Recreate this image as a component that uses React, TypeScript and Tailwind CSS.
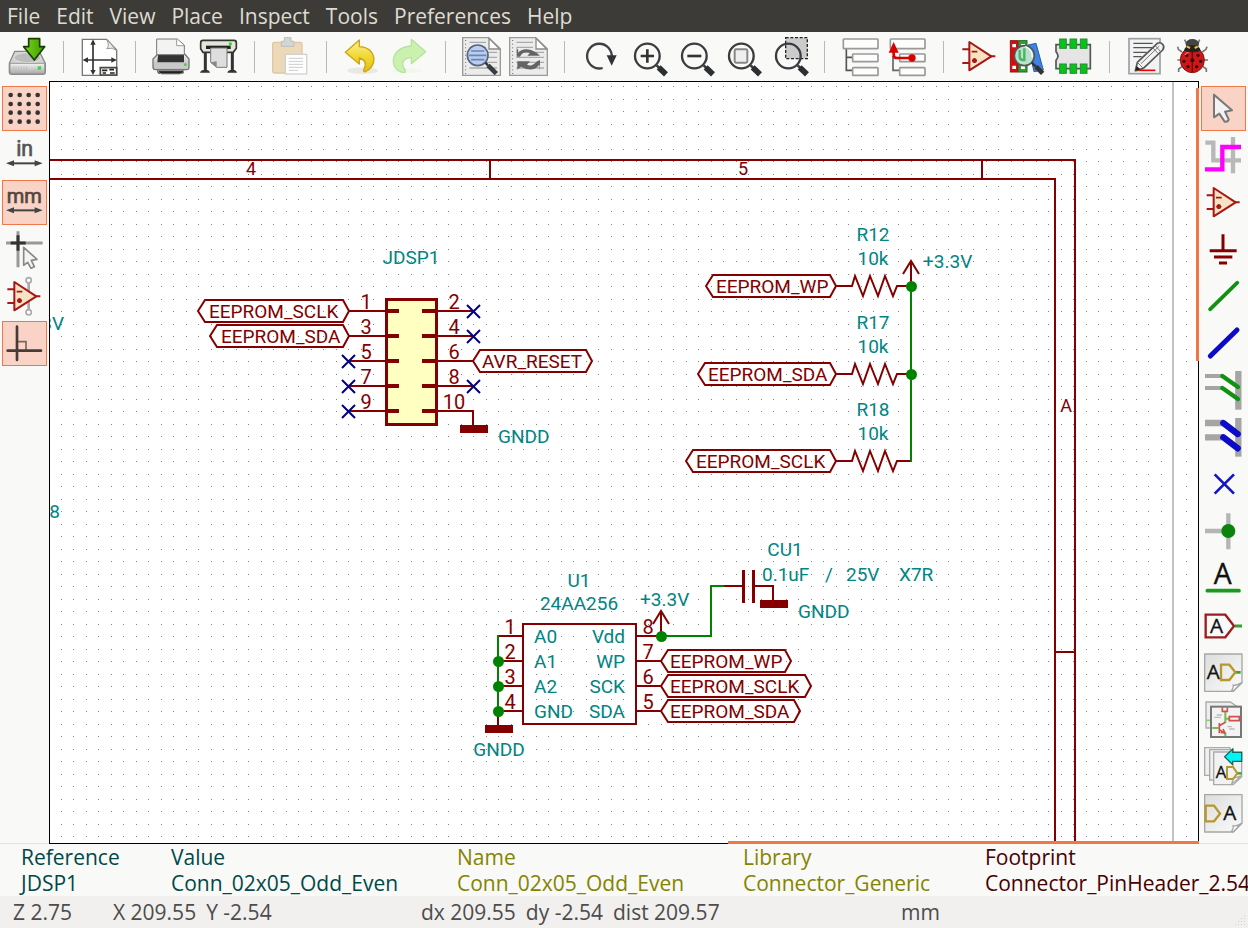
import type { ReactNode } from "react";

const MAROON = "#840000";
const TEAL = "#008484";
const GREEN = "#008400";
const BLUE = "#000084";

/* ---------- icons: each is drawn on a 117-unit square ---------- */

type Tool = { label: string; x: number; y: number; art: ReactNode; active?: boolean };

function Icon({ x, y, art }: { x: number; y: number; art: ReactNode }) {
  return (
    <svg className="size-[39px] shrink-0 overflow-visible" viewBox={`${x} ${y} 117 117`} fill="none" aria-hidden="true">
      {art}
    </svg>
  );
}

function OpAmp() {
  return (
    <g stroke="#a81616" strokeWidth="6">
      <path d="M0 26H22M0 67H22M84 47H99" />
      <path d="M21 4V89L87 47Z" fill="#f5e3c3" strokeLinejoin="round" />
      <path d="M28 33H45M29 60H44M36.500 53V67" strokeWidth="5" />
      <circle cx="36.500" cy="60" r="5" strokeWidth="4" />
    </g>
  );
}

function Lens({ cx, cy }: { cx: number; cy: number }) {
  return (
    <g stroke="#3a3d3f">
      <circle cx={cx} cy={cy} r="37" strokeWidth="7" />
      <path d={`M${cx + 28} ${cy + 28}L${cx + 36} ${cy + 36}`} strokeWidth="8" />
      <path d={`M${cx + 34} ${cy + 34}L${cx + 56} ${cy + 55}`} strokeWidth="17" stroke="#2c2f31" />
    </g>
  );
}

function Notes({ x }: { x: number }) {
  return (
    <g>
      <path
        d={`M${x} 113H${x + 78}L${x + 113} 146V226H${x}Z`}
        fill="#ececec"
        stroke="#9a9a9a"
        strokeWidth="4"
      />
      <path d={`M${x + 79} 115V147H${x + 111}Z`} fill="#fff" stroke="#8b8b8b" strokeWidth="4" />
      <path d={`M${x + 9} 120V222`} stroke="#666" strokeWidth="3" strokeDasharray="3 8" />
      <path
        d={`M${x + 20} 127H${x + 70}M${x + 20} 142H${x + 70}M${x + 20} 157H${x + 103}M${x + 20} 172H${x + 103}M${x + 20} 187H${x + 103}M${x + 20} 204H${x + 103}`}
        stroke="#aaa"
        strokeWidth="4"
      />
    </g>
  );
}

function Fold({ x, y }: { x: number; y: number }) {
  return (
    <g stroke="#a5a7a7" strokeWidth="4" strokeLinejoin="round">
      <path d={`M${x} ${y}H${x + 112}V${y + 86}L${x + 86} ${y + 112}H${x}Z`} fill="url(#paper)" />
      <path d={`M${x + 80} ${y + 111}Q${x + 88} ${y + 99} ${x + 85} ${y + 93}Q${x + 96} ${y + 96} ${x + 111} ${y + 86}L${x + 86} ${y + 111}Z`} fill="#fff" />
    </g>
  );
}

function Letter({ x, y, size, color = "#111" }: { x: number; y: number; size: number; color?: string }) {
  return (
    <text x={x} y={y} fontSize={size} fill={color} stroke={color} strokeWidth="1" fontFamily="Open Sans, sans-serif">
      A
    </text>
  );
}

const gradients = (
  <svg className="absolute size-0" aria-hidden="true">
    <defs>
      <linearGradient id="steel" x1="0" y1="0" x2="0" y2="1">
        <stop offset="0" stopColor="#f4f4f4" />
        <stop offset="1" stopColor="#a9a9a9" />
      </linearGradient>
      <linearGradient id="paper" x1="0" y1="0" x2="1" y2="1">
        <stop offset="0" stopColor="#dcdddd" />
        <stop offset="1" stopColor="#fbfbfb" />
      </linearGradient>
      <linearGradient id="gold" x1="0" y1="0" x2="0" y2="1">
        <stop offset="0" stopColor="#fdf19a" />
        <stop offset="0.5" stopColor="#f1d935" />
        <stop offset="1" stopColor="#e3bd14" />
      </linearGradient>
      <linearGradient id="arrowGreen" x1="0" y1="0" x2="1" y2="0">
        <stop offset="0" stopColor="#78d614" />
        <stop offset="1" stopColor="#3f9a04" />
      </linearGradient>
    </defs>
  </svg>
);

const topGroups: Tool[][] = [
  [
    {
      label: "Save", x: 24, y: 111, art: (
        <g>
          <path d="M44 154H118L136 190V216Q136 223 129 223H35Q28 223 28 216V190Z" fill="#d2d2d2" stroke="#8a8a8a" strokeWidth="4" />
          <ellipse cx="82" cy="173" rx="40" ry="15" fill="#bcbcbc" stroke="#eee" strokeWidth="2" />
          <path d="M30 190H134V215Q134 221 128 221H36Q30 221 30 215Z" fill="url(#steel)" stroke="#989898" strokeWidth="3" />
          <path d="M40 199V214M48 199V214M56 199V214M64 199V214M72 199V214M80 199V214" stroke="#bdbdbd" strokeWidth="3" />
          <rect x="113" y="199" width="10" height="10" fill="#3bd63b" />
          <path d="M86 116H119V140H134L103 180L71 140H86Z" fill="url(#arrowGreen)" stroke="#173d04" strokeWidth="5" strokeLinejoin="round" />
        </g>
      ),
    },
  ],
  [
    {
      label: "Page settings", x: 240, y: 111, art: (
        <g>
          <path d="M247 118H320L350 150V226H247Z" fill="#fff" stroke="#777" strokeWidth="4" />
          <path d="M320 118Q330 139 320 146Q338 140 350 152Z" fill="#eee" stroke="#999" strokeWidth="3" />
          <path d="M279 124V220M252 180H346" stroke="#333" strokeWidth="5" />
          <path d="M279 118L271 134H287ZM279 225L271 210H287ZM248 180L264 172V188ZM350 180L334 172V188Z" fill="#333" />
          <path d="M301 203H350V225H301Z" fill="#fff" stroke="#4a4545" strokeWidth="5" />
          <path d="M306 211H322M328 209H342M308 219H318M330 219H344" stroke="#222" strokeWidth="5" />
        </g>
      ),
    },
  ],
  [
    {
      label: "Print", x: 456, y: 111, art: (
        <g>
          <rect x="472" y="194" width="80" height="28" rx="8" fill="#333" />
          <path d="M474 162H554L567 177V202Q567 209 560 209H466Q459 209 459 202V177Z" fill="url(#steel)" stroke="#777" strokeWidth="4" />
          <path d="M474 165H552V187H472Z" fill="#333" />
          <path d="M470 117H532L553 135V164H470Z" fill="#f3f3f3" stroke="#777" strokeWidth="3" />
          <path d="M530 117V137H552" fill="#fff" stroke="#999" strokeWidth="3" />
          <path d="M463 190H564V206H463Z" fill="#c9c9c9" />
          <path d="M474 212H552Q550 222 538 222H486Q476 222 474 212Z" fill="#222" stroke="#999" strokeWidth="3" />
          <circle cx="556" cy="194" r="4" fill="#44d322" />
        </g>
      ),
    },
    {
      label: "Plot", x: 597, y: 111, art: (
        <g>
          <path d="M616 154V211M697 154V211" stroke="#333" strokeWidth="9" />
          <path d="M600 218Q602 209 616 209Q628 209 630 218ZM682 218Q684 209 697 209Q709 209 711 218Z" fill="#333" />
          <path d="M609 121H702Q709 121 709 128V145L700 157H609L602 146V128Q602 121 609 121Z" fill="#e4e4dd" stroke="#34342f" strokeWidth="5" />
          <path d="M618 142H692" stroke="#222" strokeWidth="10" />
          <path d="M632 144H681V202H650L632 187Z" fill="#dedede" stroke="#777" strokeWidth="3" />
          <path d="M632 187L650 202V184Z" fill="#888" />
          <circle cx="691" cy="132" r="5" fill="#29df17" />
        </g>
      ),
    },
  ],
  [
    {
      label: "Paste", x: 813, y: 111, art: (
        <g>
          <rect x="818" y="127" width="88" height="92" rx="5" fill="#edd9b8" stroke="#ddc7a5" strokeWidth="4" />
          <path d="M844 139V124H853V113H873V124H882V139Z" fill="#d5d5d3" stroke="#bdbdbb" strokeWidth="3" />
          <rect x="856" y="163" width="64" height="59" fill="#fff" stroke="#d1d1d1" strokeWidth="4" />
          <path d="M866 175H909M866 184H909M866 193H909M866 202H909M866 211H895" stroke="#ccc" strokeWidth="3" />
        </g>
      ),
    },
  ],
  [
    {
      label: "Undo", x: 1029, y: 111, art: (
        <g>
          <ellipse cx="1088" cy="212" rx="46" ry="10" fill="#e9e9e4" />
          <path d="M1036 157L1078 120V140Q1115 141 1122 175Q1122 204 1095 216Q1087 213 1093 206Q1103 181 1078 174V192Z" fill="url(#gold)" stroke="#cda412" strokeWidth="4" strokeLinejoin="round" />
        </g>
      ),
    },
    {
      label: "Redo", x: 1170, y: 111, art: (
        <g>
          <ellipse cx="1222" cy="212" rx="44" ry="8" fill="#f3f5ef" />
          <path d="M1277 155L1234 118V138Q1188 141 1180 178Q1178 207 1206 217H1215Q1218 211 1211 204Q1200 177 1234 172V191Z" fill="#caf2ae" stroke="#b5e39d" strokeWidth="4" strokeLinejoin="round" />
        </g>
      ),
    },
  ],
  [
    {
      label: "Find", x: 96, y: 111, art: (
        <g>
          <Notes x={98} />
          <circle cx="143" cy="166" r="31" fill="#bccdf0" stroke="#57657e" strokeWidth="5" />
          <path d="M123 153H163M117 166H169M123 179H163" stroke="#6787b8" strokeWidth="5" />
          <path d="M166 188L174 196" stroke="#333" strokeWidth="7" />
          <path d="M174 196L199 221" stroke="#3a3d40" strokeWidth="14" />
        </g>
      ),
    },
    {
      label: "Find and replace", x: 237, y: 111, art: (
        <g>
          <Notes x={239} />
          <path d="M263 160Q282 137 320 158L330 167H292L300 158Q278 153 270 170H260V143L265 151Z" fill="#636565" />
          <path d="M328 194Q308 220 273 200L262 209V184H300L291 194Q306 202 321 184L330 180V213Z" fill="#636565" />
        </g>
      ),
    },
  ],
  [
    {
      label: "Refresh", x: 453, y: 111, art: (
        <g>
          <path d="M518 204A37 37 0 1 1 545 172" stroke="#3f4244" strokeWidth="7" />
          <path d="M530 166H560L545 197Z" fill="#2f3234" />
        </g>
      ),
    },
    {
      label: "Zoom in", x: 594, y: 111, art: (
        <g>
          <Lens cx={652} cy={168} />
          <path d="M632 168H672M652 148V188" stroke="#333" strokeWidth="8" />
        </g>
      ),
    },
    {
      label: "Zoom out", x: 735, y: 111, art: (
        <g>
          <Lens cx={793} cy={168} />
          <path d="M772 168H814" stroke="#333" strokeWidth="8" />
        </g>
      ),
    },
    {
      label: "Zoom to fit", x: 876, y: 111, art: (
        <g>
          <Lens cx={934} cy={168} />
          <rect x="914" y="148" width="38" height="40" rx="4" fill="#eee" stroke="#888" strokeWidth="6" />
        </g>
      ),
    },
    {
      label: "Zoom to selection", x: 1017, y: 111, art: (
        <g>
          <rect x="1067" y="113" width="65" height="63" fill="#cbcbcb" stroke="#222" strokeWidth="4" strokeDasharray="9 5" />
          <Lens cx={1075} cy={168} />
        </g>
      ),
    },
  ],
  [
    {
      label: "Hierarchy", x: 63, y: 111, art: (
        <g strokeWidth="5">
          <path d="M79 147V211H97M79 172H97" stroke="#555" />
          <g fill="#fdfdfd" stroke="#999">
            <rect x="70" y="117" width="104" height="29" rx="2" />
            <rect x="98" y="162" width="76" height="23" rx="2" />
            <rect x="98" y="203" width="76" height="23" rx="2" />
          </g>
        </g>
      ),
    },
    {
      label: "Leave sheet", x: 204, y: 111, art: (
        <g strokeWidth="5">
          <path d="M219 168V211H238" stroke="#666" />
          <g fill="#fdfdfd" stroke="#999">
            <rect x="211" y="117" width="104" height="29" rx="2" />
            <rect x="239" y="162" width="76" height="23" rx="2" />
            <rect x="239" y="203" width="76" height="23" rx="2" />
          </g>
          <path d="M221 150V164Q221 174 231 174H276" stroke="#d90000" strokeWidth="8" />
          <path d="M221 126L236 158H206Z" fill="#d90000" />
          <circle cx="276" cy="174" r="11" fill="#d90000" />
        </g>
      ),
    },
  ],
  [
    { label: "Symbol editor", x: 420, y: 111, art: <g transform="translate(427 122)"><OpAmp /></g> },
    {
      label: "Symbol libraries", x: 561, y: 111, art: (
        <g>
          <rect x="571" y="122" width="23" height="94" fill="#d50d0d" stroke="#8a1a1a" strokeWidth="3" />
          <rect x="596" y="122" width="25" height="94" fill="#2da32e" stroke="#23632a" strokeWidth="3" />
          <path d="M577 137H588M577 202H588M603 137H615M603 202H615" stroke="#fff" strokeWidth="10" />
          <path d="M624 135L648 130L670 210L642 215Z" fill="#3d82e4" stroke="#285f9e" strokeWidth="3" />
          <circle cx="613" cy="167" r="30" fill="#bce0cf" stroke="#555" strokeWidth="5" />
          <path d="M599 150V172Q601 182 613 180V145" stroke="#45b65c" strokeWidth="7" />
          <path d="M616 139Q638 148 637 172" stroke="#fff" strokeWidth="4" />
          <path d="M635 188L648 200" stroke="#333" strokeWidth="7" />
          <path d="M648 200L668 220" stroke="#333" strokeWidth="14" />
        </g>
      ),
    },
    {
      label: "Footprint editor", x: 702, y: 111, art: (
        <g>
          <path d="M708 134H811V206H708V181Q720 168 708 155Z" fill="#e5e5e5" stroke="#555" strokeWidth="5" />
          <g fill="#04c41c" stroke="#2a8c33" strokeWidth="3">
            <rect x="719" y="117" width="20" height="28" />
            <rect x="750" y="117" width="20" height="28" />
            <rect x="781" y="117" width="20" height="28" />
            <rect x="719" y="192" width="20" height="28" />
            <rect x="750" y="192" width="20" height="28" />
            <rect x="781" y="192" width="20" height="28" />
          </g>
        </g>
      ),
    },
  ],
  [
    {
      label: "Annotate", x: 918, y: 111, art: (
        <g>
          <rect x="927" y="116" width="93" height="105" fill="#f3f3f3" stroke="#9aa1a4" strokeWidth="5" />
          <path d="M940 130H998M940 143H998M940 157H980M940 170H965" stroke="#555" strokeWidth="4" />
          <path d="M946 211H1006" stroke="#f20000" strokeWidth="5" />
          <path d="M952 187L1012 130Q1022 125 1029 134Q1034 142 1028 150L970 205L946 212Z" fill="#f3f3f3" stroke="#555" strokeWidth="5" strokeLinejoin="round" />
          <path d="M963 191L1018 138M998 143L1014 160M952 187L970 205M1005 136L1021 154" stroke="#777" strokeWidth="3" />
          <path d="M950 198L946 212L961 208Z" fill="#222" />
        </g>
      ),
    },
    {
      label: "Electrical rules check", x: 1059, y: 111, art: (
        <g>
          <path d="M1086 156L1075 148L1073 140M1147 156L1158 148L1161 140M1082 180H1072M1152 180H1164M1087 199L1076 207V216M1148 199L1159 207V216M1100 132L1094 119M1133 132L1139 119" stroke="#777" strokeWidth="5" />
          <ellipse cx="1117" cy="132" rx="20" ry="15" fill="#444" />
          <ellipse cx="1117" cy="180" rx="36" ry="38" fill="#cf1717" stroke="#821414" strokeWidth="3" />
          <path d="M1092 152Q1095 136 1117 136Q1139 136 1142 152Q1118 162 1092 152Z" fill="#222" />
          <path d="M1101 140L1110 144M1133 140L1124 144" stroke="#f0ca22" strokeWidth="6" />
          <path d="M1117 154V216" stroke="#5d0909" strokeWidth="4" />
          <g fill="#3a0808">
            <circle cx="1100" cy="166" r="5" /><circle cx="1134" cy="166" r="5" />
            <circle cx="1092" cy="184" r="5" /><circle cx="1142" cy="184" r="5" />
            <circle cx="1104" cy="200" r="5" /><circle cx="1130" cy="200" r="5" />
            <circle cx="1117" cy="181" r="6" />
          </g>
          <path d="M1095 165Q1099 158 1106 157" stroke="#f27777" strokeWidth="4" />
        </g>
      ),
    },
  ],
];

const unitArrow = (y: number) => (
  <g>
    <path d={`M30 ${y}H116`} stroke="#444" strokeWidth="6" />
    <path d={`M18 ${y}L42 ${y - 9}V${y + 9}ZM128 ${y}L104 ${y - 9}V${y + 9}Z`} fill="#444" />
  </g>
);

const leftTools: Tool[] = [
  {
    label: "Show grid", x: 15, y: 27, active: true, art: (
      <g fill="#333">
        {[45, 72, 98, 125].map((cy) => [32, 59, 86, 113].map((cx) => <circle key={`${cx}-${cy}`} cx={cx} cy={cy} r="7" />))}
      </g>
    ),
  },
  {
    label: "Inches", x: 15, y: 168, art: (
      <g>
        <text x="74" y="229" fontSize="64" textAnchor="middle" fill="#555" stroke="#555" strokeWidth="2" fontFamily="Roboto, sans-serif">in</text>
        {unitArrow(250)}
      </g>
    ),
  },
  {
    label: "Millimetres", x: 15, y: 309, active: true, art: (
      <g>
        <text x="73" y="370" fontSize="60" textAnchor="middle" fill="#54463f" stroke="#54463f" strokeWidth="2" fontFamily="Roboto, sans-serif">mm</text>
        {unitArrow(391)}
      </g>
    ),
  },
  {
    label: "Cursor shape", x: 15, y: 450, art: (
      <g>
        <path d="M18 489H128M54 454V562" stroke="#999" strokeWidth="9" />
        <path d="M32 489H77M54 466V512" stroke="#333" strokeWidth="9" />
        <path d="M71 502V556L83 547L93 565L103 560L94 541L111 538Z" fill="#f4f4f4" stroke="#888" strokeWidth="5" strokeLinejoin="round" />
      </g>
    ),
  },
  {
    label: "Hidden pins", x: 15, y: 591, art: (
      <g>
        <path d="M86 604V694" stroke="#aaa" strokeWidth="8" />
        <g fill="#fff" stroke="#aaa" strokeWidth="5">
          <circle cx="86" cy="601" r="8" />
          <circle cx="86" cy="697" r="8" />
        </g>
        <g transform="translate(22 602)"><OpAmp /></g>
      </g>
    ),
  },
  {
    label: "Horizontal and vertical lines", x: 15, y: 732, active: true, art: (
      <g>
        <path d="M51 785H78V812" stroke="#78685f" strokeWidth="5" />
        <path d="M51 740V840M23 812H123" stroke="#463b36" strokeWidth="8" strokeLinecap="round" />
      </g>
    ),
  },
];

const rightTools: Tool[] = [
  {
    label: "Select", x: 162, y: 27, active: true, art: (
      <path d="M192 44V112L208 101L224 125Q234 127 236 118L225 95L246 91Z" fill="#f2f2f2" stroke="#777" strokeWidth="6" strokeLinejoin="round" />
    ),
  },
  {
    label: "Highlight net", x: 162, y: 168, art: (
      <g strokeWidth="13">
        <path d="M166 188H190V241H273M249 171V280" stroke="#b8b8b8" />
        <path d="M165 268H217V201H273" stroke="#ff00ff" />
      </g>
    ),
  },
  { label: "Place symbol", x: 162, y: 309, art: <g transform="translate(170 320)"><OpAmp /></g> },
  {
    label: "Place power port", x: 162, y: 450, art: (
      <path d="M219 463V512M179 512H260M192 531H247M207 549H231" stroke="#840000" strokeWidth="9" />
    ),
  },
  { label: "Place wire", x: 162, y: 591, art: <path d="M180 688L262 608" stroke="#129012" strokeWidth="11" strokeLinecap="round" /> },
  { label: "Place bus", x: 162, y: 732, art: <path d="M181 828L261 750" stroke="#0b0bc8" strokeWidth="15" strokeLinecap="round" /> },
  {
    label: "Wire to bus entry", x: 162, y: 873, art: (
      <g>
        <path d="M265 873V989" stroke="#a5a5a5" strokeWidth="19" />
        <path d="M165 888H217M165 924H217" stroke="#a5a5a5" strokeWidth="12" />
        <path d="M217 888L264 921M217 924L264 957" stroke="#129012" strokeWidth="13" strokeLinecap="round" />
      </g>
    ),
  },
  {
    label: "Bus to bus entry", x: 162, y: 1014, art: (
      <g>
        <path d="M265 1014V1130" stroke="#a5a5a5" strokeWidth="19" />
        <path d="M165 1029H217M165 1072H217" stroke="#a5a5a5" strokeWidth="19" />
        <path d="M220 1029L263 1062M220 1072L263 1105" stroke="#0b0bc8" strokeWidth="19" strokeLinecap="round" />
      </g>
    ),
  },
  { label: "No-connect flag", x: 162, y: 30, art: <path d="M194 58L252 116M252 58L194 116" stroke="#1414c8" strokeWidth="8" /> },
  {
    label: "Junction", x: 162, y: 171, art: (
      <g>
        <path d="M165 228H235M235 175V283" stroke="#b5b5b5" strokeWidth="13" />
        <circle cx="235" cy="228" r="21" fill="#0b840b" />
      </g>
    ),
  },
  {
    label: "Net label", x: 162, y: 312, art: (
      <g>
        <Letter x={191} y={387} size={85} />
        <path d="M172 407H267" stroke="#1c9a1c" strokeWidth="11" strokeLinecap="round" />
      </g>
    ),
  },
  {
    label: "Global label", x: 162, y: 453, art: (
      <g>
        <path d="M255 513H276" stroke="#31a331" strokeWidth="9" />
        <path d="M167 479H226L252 513L226 547H167Z" fill="#fafafa" stroke="#9c1d1d" strokeWidth="7" />
        <Letter x={180} y={534} size={62} />
      </g>
    ),
  },
  {
    label: "Hierarchical label", x: 162, y: 594, art: (
      <g>
        <Fold x={164} y={597} />
        <Letter x={170} y={672} size={62} />
        <path d="M256 652H272" stroke="#31a331" strokeWidth="8" />
        <path d="M213 629H238L256 652L238 675H213Z" stroke="#b8982a" strokeWidth="7" />
      </g>
    ),
  },
  {
    label: "Hierarchical sheet", x: 162, y: 735, art: (
      <g>
        <path d="M168 741H241L272 762V819H168Z" fill="#eee" stroke="#aaa" strokeWidth="4" />
        <path d="M168 796H182" stroke="#8bd26a" strokeWidth="5" />
        <rect x="183" y="755" width="90" height="91" fill="#f3f3f3" stroke="#777" strokeWidth="6" />
        <path d="M187 819H206M226 771V804M226 835V844M226 791H239" stroke="#74bd4c" strokeWidth="6" />
        <path d="M217 757V769H232V757M238 785H268V797H238ZM208 804V835M208 812L226 802M208 824L226 836M212 832L225 834L219 822" stroke="#d05050" strokeWidth="5" />
        <path d="M200 780H216M193 787H212M232 815H246M238 822H254" stroke="#bbb" strokeWidth="4" />
      </g>
    ),
  },
  {
    label: "Import sheet pin", x: 162, y: 876, art: (
      <g>
        <path d="M164 878H240V961H164Z" fill="#f0f0f0" stroke="#aaa" strokeWidth="4" />
        <path d="M179 884H250V975H179Z" fill="#f0f0f0" stroke="#aaa" strokeWidth="4" />
        <path d="M191 891H275V965L250 989H191Z" fill="#f2f2f2" stroke="#aaa" strokeWidth="4" />
        <path d="M245 987L251 969L274 963Z" fill="#fff" stroke="#aaa" strokeWidth="4" />
        <Letter x={197} y={970} size={50} />
        <path d="M260 955H275" stroke="#31a331" strokeWidth="7" />
        <path d="M231 936H249L262 955L249 972H231Z" stroke="#b8982a" strokeWidth="6" />
        <path d="M224 905L248 882V892H275V919H248V929Z" fill="#00f5f5" stroke="#176666" strokeWidth="4" />
      </g>
    ),
  },
  {
    label: "Sheet pin", x: 162, y: 1017, art: (
      <g>
        <Fold x={164} y={1019} />
        <path d="M167 1052H192L210 1076L192 1099H167Z" stroke="#b8982a" strokeWidth="7" />
        <Letter x={220} y={1095} size={62} />
      </g>
    ),
  },
];

/* ---------- schematic ---------- */

function T({ x, y, children, color = TEAL, anchor = "start" }: {
  x: number; y: number; children: string; color?: string; anchor?: "start" | "middle" | "end";
}) {
  return (
    <text x={x} y={y} fill={color} textAnchor={anchor} className="text-[19px]">
      {children}
    </text>
  );
}

function PinNumber({ x, y, children }: { x: number; y: number; children: string }) {
  return (
    <text x={x} y={y} fill={MAROON} textAnchor="middle" className="text-xl">
      {children}
    </text>
  );
}

function GlobalLabel({ x1, x2, y, textX, children }: { x1: number; x2: number; y: number; textX: number; children: string }) {
  return (
    <g>
      <path
        d={`M${x1} ${y}L${x1 + 7} ${y - 11}H${x2 - 6}L${x2} ${y}L${x2 - 6} ${y + 11}H${x1 + 7}Z`}
        stroke={MAROON} strokeWidth="2" fill="none"
      />
      <T x={textX} y={y + 7} color={MAROON}>{children}</T>
    </g>
  );
}

function Ground({ x, y }: { x: number; y: number }) {
  return <rect x={x - 14} y={y} width="28" height="8" fill={MAROON} />;
}

function PowerArrow({ x, y }: { x: number; y: number }) {
  return <path d={`M${x} ${y}V${y - 24}M${x - 8} ${y - 12}L${x} ${y - 25}L${x + 8} ${y - 12}`} stroke={MAROON} strokeWidth="2" fill="none" />;
}

const rows = [0, 1, 2, 3, 4].map((i) => 311 + i * 25);
const resistors = [
  { name: "R12", y: 286, x1: 706, net: "EEPROM_WP" },
  { name: "R17", y: 374, x1: 698, net: "EEPROM_SDA" },
  { name: "R18", y: 461, x1: 686, net: "EEPROM_SCLK" },
];
const chipPins = [
  { left: "A0", right: "Vdd", l: "1", r: "8", y: 636 },
  { left: "A1", right: "WP", l: "2", r: "7", y: 661 },
  { left: "A2", right: "SCK", l: "3", r: "6", y: 686 },
  { left: "GND", right: "SDA", l: "4", r: "5", y: 711 },
];

function Schematic() {
  return (
    <svg className="block size-full overflow-hidden font-[Roboto,sans-serif]" role="img" aria-label="Schematic sheet">
      <defs>
        <pattern id="grid" x="61" y="86" width="25" height="25" patternUnits="userSpaceOnUse">
          <path d="M0 0h1v1h-1zM12 0h1v1h-1zM0 13h1v1h-1zM12 13h1v1h-1z" fill="#848484" shapeRendering="crispEdges" />
        </pattern>
      </defs>
      <g transform="translate(-50 -82)">
        <rect x="50" y="82" width="4000" height="3000" fill="url(#grid)" />
        <path d="M1173 82V3000" stroke="#c2c2c2" strokeWidth="2" />

        <g stroke={MAROON} strokeWidth="2" fill="none">
          <path d="M50 160H1075V3000M50 179H1055V3000M490 160V179M982 160V179M1055 652H1075" />
        </g>
        <g fill={MAROON} textAnchor="middle" className="text-lg">
          <text x="251" y="175">4</text>
          <text x="743" y="175">5</text>
          <text x="1066" y="412">A</text>
        </g>

        <T x={64} y={330} anchor="end">+3.3V</T>
        <T x={60} y={518} anchor="end">8</T>

        <T x={411} y={264} anchor="middle">JDSP1</T>
        <rect x="386.500" y="299.500" width="50" height="125" fill="#ffffc2" stroke={MAROON} strokeWidth="3" />
        {rows.map((y, i) => (
          <g key={y}>
            <path d={`M348 ${y}H386M437 ${y}H474`} stroke={MAROON} strokeWidth="2" />
            <path d={`M386 ${y}H399M422 ${y}H437`} stroke={MAROON} strokeWidth="4" />
            <PinNumber x={366} y={y - 2}>{String(i * 2 + 1)}</PinNumber>
            <PinNumber x={454} y={y - 2}>{String(i * 2 + 2)}</PinNumber>
          </g>
        ))}
        {[[473, 311], [473, 336], [473, 386], [348, 361], [348, 386], [348, 411]].map(([x, y]) => (
          <path key={`${x}-${y}`} d={`M${x - 6} ${y - 6}l13 13m0 -13l-13 13`} stroke={BLUE} strokeWidth="2" />
        ))}
        <GlobalLabel x1={198} x2={349} y={311} textX={209}>EEPROM_SCLK</GlobalLabel>
        <GlobalLabel x1={210} x2={349} y={336} textX={221}>EEPROM_SDA</GlobalLabel>
        <GlobalLabel x1={473} x2={592} y={361} textX={482}>AVR_RESET</GlobalLabel>
        <path d="M473 411V426" stroke={MAROON} strokeWidth="2" />
        <Ground x={474} y={425} />
        <T x={498} y={443}>GNDD</T>

        {resistors.map(({ name, y, x1, net }) => (
          <g key={name}>
            <T x={873} y={y - 45} anchor="middle">{name}</T>
            <T x={873} y={y - 21} anchor="middle">10k</T>
            <GlobalLabel x1={x1} x2={836} y={y} textX={x1 + 10}>{net}</GlobalLabel>
            <path
              d={`M836 ${y}H852L855 ${y - 10}L863 ${y + 10}L870 ${y - 10}L878 ${y + 10}L885 ${y - 10}L893 ${y + 10}L897 ${y}H911`}
              stroke={MAROON} strokeWidth="2" fill="none"
            />
          </g>
        ))}
        <PowerArrow x={911} y={286} />
        <T x={923} y={268}>+3.3V</T>
        <path d="M911 286V462" stroke={GREEN} strokeWidth="2" />
        <circle cx="911.500" cy="286.500" r="5.500" fill={GREEN} />
        <circle cx="911.500" cy="374.500" r="5.500" fill={GREEN} />

        <T x={579} y={587} anchor="middle">U1</T>
        <T x={579} y={610} anchor="middle">24AA256</T>
        <rect x="523" y="624" width="113" height="100" fill="none" stroke={MAROON} strokeWidth="2" />
        {chipPins.map((p) => (
          <g key={p.l}>
            <path d={`M498 ${p.y}H523M637 ${p.y}H662`} stroke={MAROON} strokeWidth="2" />
            <PinNumber x={510} y={p.y - 2}>{p.l}</PinNumber>
            <PinNumber x={648} y={p.y - 2}>{p.r}</PinNumber>
            <T x={534} y={p.y + 7}>{p.left}</T>
            <T x={625} y={p.y + 7} anchor="end">{p.right}</T>
          </g>
        ))}
        <path d="M498 711V726" stroke={MAROON} strokeWidth="2" />
        <path d="M498 635V711" stroke={GREEN} strokeWidth="2" />
        {[661, 686, 711].map((y) => <circle key={y} cx="498.500" cy={y + 0.5} r="5.500" fill={GREEN} />)}
        <Ground x={499} y={725} />
        <T x={499} y={756} anchor="middle">GNDD</T>
        <GlobalLabel x1={661} x2={791} y={661} textX={670}>EEPROM_WP</GlobalLabel>
        <GlobalLabel x1={661} x2={811} y={686} textX={670}>EEPROM_SCLK</GlobalLabel>
        <GlobalLabel x1={661} x2={800} y={711} textX={670}>EEPROM_SDA</GlobalLabel>

        <T x={640} y={606}>+3.3V</T>
        <PowerArrow x={661} y={636} />
        <path d="M661 636H711V586H724" stroke={GREEN} strokeWidth="2" fill="none" />
        <circle cx="661.500" cy="636.500" r="5.500" fill={GREEN} />
        <path d="M724 586H743M754 586H773V601" stroke={MAROON} strokeWidth="2" fill="none" />
        <path d="M743.500 570V603M753.500 570V603" stroke={MAROON} strokeWidth="3" />
        <Ground x={774} y={600} />
        <T x={798} y={618}>GNDD</T>
        <T x={785} y={556} anchor="middle">CU1</T>
        <T x={762} y={581}>0.1uF</T>
        <T x={825} y={581}>/</T>
        <T x={846} y={581}>25V</T>
        <T x={899} y={581}>X7R</T>
      </g>
    </svg>
  );
}

/* ---------- window ---------- */

const menus = ["File", "Edit", "View", "Place", "Inspect", "Tools", "Preferences", "Help"];

const fields = [
  { name: "Reference", value: "JDSP1", tone: "text-[#004848]" },
  { name: "Value", value: "Conn_02x05_Odd_Even", tone: "text-[#004848]" },
  { name: "Name", value: "Conn_02x05_Odd_Even", tone: "text-[#848400]" },
  { name: "Library", value: "Connector_Generic", tone: "text-[#848400]" },
  { name: "Footprint", value: "Connector_PinHeader_2.54mm", tone: "text-[#480000]" },
];

function SideBar({ tools, label }: { tools: Tool[]; label: string }) {
  return (
    <aside aria-label={label} className="flex w-[49px] shrink-0 flex-col items-center gap-0.5 border-b border-[#e3e3e1] pt-[5px]">
      {tools.map((t) => (
        <button
          key={t.label}
          type="button"
          aria-label={t.label}
          aria-pressed={!!t.active}
          className={
            t.active
              ? "flex size-[45px] shrink-0 items-center justify-center border border-[#f07746] bg-[#f9d3c5]"
              : "flex size-[45px] shrink-0 items-center justify-center"
          }
        >
          <Icon x={t.x} y={t.y} art={t.art} />
        </button>
      ))}
    </aside>
  );
}

export default function App() {
  return (
    <div className="flex h-screen flex-col overflow-hidden bg-[#f9f9f7] font-['Open_Sans',sans-serif] text-[21px]">
      {gradients}
      <nav className="flex h-8 shrink-0 items-center gap-4 bg-[#3c3b37] px-[7px] text-[#dfdbd2]">
        {menus.map((m) => (
          <button key={m} type="button" className="leading-8">{m}</button>
        ))}
      </nav>

      <div role="toolbar" aria-label="Main toolbar" className="flex h-[49px] shrink-0 items-center pl-1">
        {topGroups.map((group, i) => (
          <div key={group[0].label} className="flex items-center">
            {i > 0 && (
              <div className="flex w-[25px] justify-center">
                <div className="h-8 w-px bg-[#b9b9b7]" />
              </div>
            )}
            {group.map((t) => (
              <button key={t.label} type="button" aria-label={t.label} className="flex w-[47px] justify-center">
                <Icon x={t.x} y={t.y} art={t.art} />
              </button>
            ))}
          </div>
        ))}
      </div>

      <div className="flex min-h-0 flex-1">
        <SideBar tools={leftTools} label="Options" />
        <main className="relative min-w-0 flex-1 border border-black bg-white">
          <Schematic />
          <div className="absolute top-1.5 -right-px h-[273px] w-[3px] bg-[#f07746]" />
          <div className="absolute -right-px -bottom-px h-[3px] w-[471px] bg-[#f07746]" />
        </main>
        <SideBar tools={rightTools} label="Drawing tools" />
      </div>

      <dl className="grid shrink-0 grid-cols-[150px_286px_286px_242px_1fr] pl-[21px] leading-[26px]">
        {fields.map((f) => (
          <div key={f.name} className={`min-w-0 whitespace-nowrap ${f.tone}`}>
            <dt>{f.name}</dt>
            <dd>{f.value}</dd>
          </div>
        ))}
      </dl>

      <footer className="flex h-8 shrink-0 items-center bg-[#f1f0ef] pl-[13px] leading-8 text-[#4c4c4c]">
        <span className="w-[100px]">Z 2.75</span>
        <span className="flex w-[308px] gap-2.5"><span>X 209.55</span><span>Y -2.54</span></span>
        <span className="flex w-[480px] gap-2.5"><span>dx 209.55</span><span>dy -2.54</span><span>dist 209.57</span></span>
        <span>mm</span>
        <svg className="mr-0.5 mb-0.5 ml-auto size-3 self-end" viewBox="0 0 12 12" fill="#d2d0ce" aria-hidden="true">
          <path d="M10 1h1v1h-1zM7 4h1v1h-1zM10 4h1v1h-1zM4 7h1v1h-1zM7 7h1v1h-1zM10 7h1v1h-1zM1 10h1v1h-1zM4 10h1v1h-1zM7 10h1v1h-1zM10 10h1v1h-1z" />
        </svg>
      </footer>
    </div>
  );
}
